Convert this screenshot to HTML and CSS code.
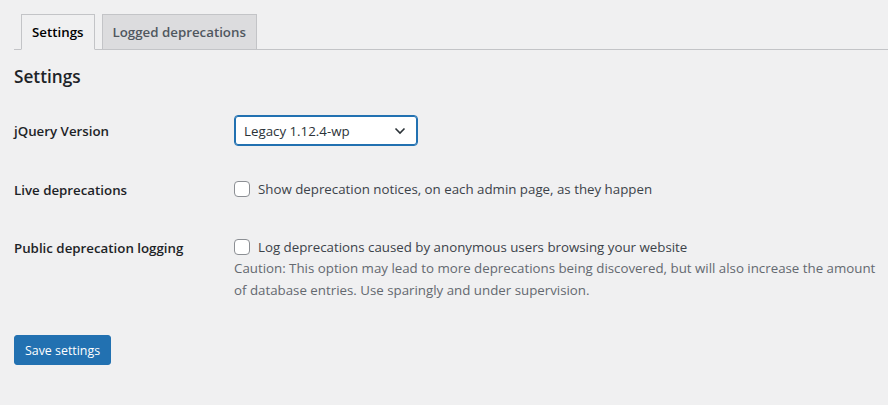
FILE: index.html
```html
<!DOCTYPE html>
<html lang="en">
<head>
<meta charset="utf-8">
<title>Settings</title>
<link rel="stylesheet" href="styles.css">
</head>
<body>
<div class="wrap">
  <nav class="nav-tab-wrapper">
    <a class="nav-tab nav-tab-active" href="#">Settings</a>
    <a class="nav-tab" href="#">Logged deprecations</a>
  </nav>
  <h2 class="title">Settings</h2>
  <table class="form-table">
    <tr class="row-select">
      <th>jQuery Version</th>
      <td>
        <div class="select">
          <span>Legacy 1.12.4-wp</span>
          <svg width="12" height="8" viewBox="0 0 12 8" aria-hidden="true"><path d="M1.5 1.5 L6 6 L10.5 1.5" fill="none" stroke="#2c3338" stroke-width="1.6"/></svg>
        </div>
      </td>
    </tr>
    <tr>
      <th>Live deprecations</th>
      <td><label class="check"><span class="box"></span>Show deprecation notices, on each admin page, as they happen</label></td>
    </tr>
    <tr>
      <th>Public deprecation logging</th>
      <td>
        <label class="check"><span class="box"></span>Log deprecations caused by anonymous users browsing your website</label>
        <p class="description">Caution: This option may lead to more deprecations being discovered, but will also increase the amount of database entries. Use sparingly and under supervision.</p>
      </td>
    </tr>
  </table>
  <p class="submit"><button class="button-primary" type="button">Save settings</button></p>
</div>
</body>
</html>
```

FILE: styles.css
```css
html, body {
  margin: 0;
  padding: 0;
  background: #f0f0f1;
}
body {
  font-family: "Open Sans", "Noto Sans", sans-serif;
  font-size: 13px;
  color: #3c434a;
}
.wrap {
  padding: 14px 0 0 14px;
}
.nav-tab-wrapper {
  display: flex;
  border-bottom: 1px solid #c3c4c7;
  padding-left: 7px;
  gap: 7px;
}
.nav-tab {
  display: block;
  margin-bottom: -1px;
  padding: 5px 10px;
  border: 1px solid #c3c4c7;
  background: #dcdcde;
  color: #50575e;
  font-size: 13.3px;
  font-weight: 600;
  line-height: 24px;
  text-decoration: none;
}
.nav-tab-active {
  background: #f0f0f1;
  border-bottom-color: #f0f0f1;
  color: #000;
}
.title {
  margin: 15px 0 0;
  font-size: 17.2px;
  font-weight: 600;
  line-height: 24px;
  color: #1d2327;
}
.form-table {
  border-collapse: collapse;
  margin-top: 13px;
  width: 100%;
}
.form-table th {
  width: 200px;
  padding: 20px 10px 20px 0;
  text-align: left;
  vertical-align: top;
  font-size: 13.3px;
  font-weight: 600;
  line-height: 18px;
  color: #1d2327;
}
.form-table td {
  padding: 15px 10px 15px 10px;
  vertical-align: top;
  font-size: 13.3px;
  line-height: 22px;
}
.form-table .row-select td {
  padding-top: 13px;
}
.select {
  box-sizing: border-box;
  width: 184px;
  height: 31px;
  border: 1px solid #2271b1;
  box-shadow: 0 0 0 1px #2271b1 inset;
  border-radius: 4px;
  background: #fff;
  display: flex;
  align-items: center;
  justify-content: space-between;
  padding: 0 11px 0 9px;
  color: #2c3338;
  font-size: 13.3px;
}
.check {
  display: flex;
  align-items: center;
  gap: 8px;
  color: #3c434a;
  margin-top: 2px;
}
.box {
  box-sizing: border-box;
  width: 16px;
  height: 16px;
  border: 1px solid #8c8f94;
  border-radius: 4px;
  background: #fff;
  flex: none;
}
.description {
  margin: -1px 0 0;
  color: #646970;
}
.submit {
  margin: 19px 0 0;
}
.button-primary {
  font-family: inherit;
  background: #2271b1;
  border: 1px solid #2271b1;
  border-radius: 3px;
  color: #fff;
  font-size: 12.4px;
  line-height: 27px;
  padding: 0 10px;
  height: 30px;
}
```
